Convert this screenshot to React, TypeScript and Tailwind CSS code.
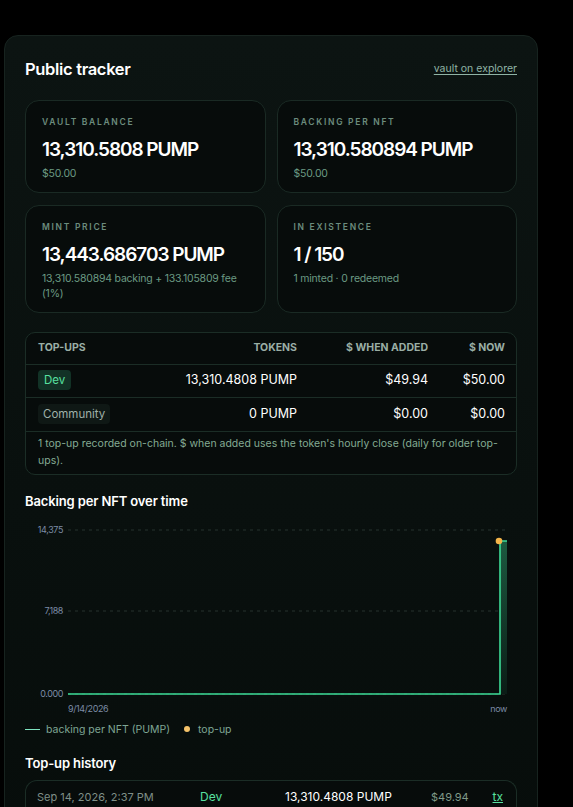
const font = { fontFamily: "Inter, 'Liberation Sans', sans-serif" };

function StatCard({ label, value, sub }: { label: string; value: string; sub: React.ReactNode }) {
  return (
    <div className="rounded-[14px] border border-[#1a2a24] bg-[#070c0b] px-[16px] pb-[11px] pt-[15px]">
      <div className="text-[8.5px] font-semibold uppercase leading-[12px] tracking-[0.2em] text-[#6c8c7e]">
        {label}
      </div>
      <div className="mt-[9px] text-[19px] font-semibold leading-[26px] tracking-[-0.055em] text-white">
        {value}
      </div>
      <div className="mt-[3px] text-[10.5px] leading-[15px] tracking-[-0.02em] text-[#6b9a83]">{sub}</div>
    </div>
  );
}

function Chart() {
  return (
    <svg width="491" height="197" viewBox="0 0 491 197" className="mt-[11px] block">
      <defs>
        <linearGradient id="fill" x1="0" y1="0" x2="0" y2="1">
          <stop offset="0%" stopColor="#1c5a40" />
          <stop offset="100%" stopColor="#0b1c16" />
        </linearGradient>
      </defs>
      <line x1="43" y1="9" x2="482" y2="9" stroke="#27332e" strokeWidth="1" strokeDasharray="3 4" />
      <line x1="43" y1="90" x2="482" y2="90" stroke="#27332e" strokeWidth="1" strokeDasharray="3 4" />
      <line x1="43" y1="173" x2="482" y2="173" stroke="#27332e" strokeWidth="1" strokeDasharray="3 4" />
      <rect x="475" y="20" width="7" height="153" fill="url(#fill)" />
      <polyline
        points="43,173 475,173 475,20 482,20"
        fill="none"
        stroke="#3ddc97"
        strokeWidth="1.6"
      />
      <circle cx="474" cy="20" r="3.3" fill="#f4b54a" />
      <g fontSize="9" fill="#7c8ca6" style={font}>
        <text x="38" y="12" textAnchor="end" letterSpacing="-0.4">14,375</text>
        <text x="38" y="93" textAnchor="end" letterSpacing="-0.4">7,188</text>
        <text x="38" y="176" textAnchor="end" letterSpacing="-0.4">0.000</text>
        <text x="43" y="191" letterSpacing="-0.4">9/14/2026</text>
        <text x="482" y="191" textAnchor="end" letterSpacing="-0.4">now</text>
      </g>
    </svg>
  );
}

export default function App() {
  return (
    <div className="min-h-[807px] bg-black pt-[35px] pl-[4px]" style={font}>
      <div className="w-[534px] rounded-t-[14px] border border-[#17231f] bg-gradient-to-b from-[#0c1412] to-[#070d0b] px-[20px] pt-[21px] pb-[40px]">
        <div className="flex items-center justify-between">
          <h1 className="text-[16.5px] font-semibold leading-[24px] tracking-[-0.02em] text-white">
            Public tracker
          </h1>
          <a className="text-[10.5px] text-[#8fb3a5] underline underline-offset-2">vault on explorer</a>
        </div>

        <div className="mt-[19px] grid grid-cols-2 gap-x-[11px] gap-y-[12px]">
          <StatCard label="Vault balance" value="13,310.5808 PUMP" sub="$50.00" />
          <StatCard label="Backing per NFT" value="13,310.580894 PUMP" sub="$50.00" />
          <StatCard
            label="Mint price"
            value="13,443.686703 PUMP"
            sub="13,310.580894 backing + 133.105809 fee (1%)"
          />
          <StatCard label="In existence" value="1 / 150" sub="1 minted · 0 redeemed" />
        </div>

        <div className="mt-[19px] overflow-hidden rounded-[10px] border border-[#1b2d26] bg-[#070c0b]">
          <table className="w-full table-fixed text-[12.5px]">
            <colgroup>
              <col className="w-[150px]" />
              <col className="w-[121px]" />
              <col className="w-[131px]" />
              <col />
            </colgroup>
            <thead>
              <tr className="h-[31px] border-b border-[#1b2d26] text-[10.5px] font-bold uppercase text-[#9aaea5]">
                <th className="pl-[12px] text-left font-bold">Top-ups</th>
                <th className="text-right font-bold">Tokens</th>
                <th className="text-right font-bold">$ when added</th>
                <th className="pr-[11px] text-right font-bold">$ now</th>
              </tr>
            </thead>
            <tbody>
              <tr className="h-[33px] border-b border-[#1b2d26] text-white">
                <td className="pl-[12px]">
                  <span className="rounded-[4px] bg-[#123226] px-[6px] py-[3px] text-[11.5px] text-[#58e0a0]">Dev</span>
                </td>
                <td className="text-right">13,310.4808 PUMP</td>
                <td className="text-right">$49.94</td>
                <td className="pr-[11px] text-right">$50.00</td>
              </tr>
              <tr className="h-[34px] border-b border-[#1b2d26] text-white">
                <td className="pl-[12px]">
                  <span className="rounded-[4px] bg-[#0f1815] px-[5px] py-[3px] text-[11.5px] text-[#9fb0a8]">Community</span>
                </td>
                <td className="text-right">0 PUMP</td>
                <td className="text-right">$0.00</td>
                <td className="pr-[11px] text-right">$0.00</td>
              </tr>
            </tbody>
          </table>
          <p className="px-[12px] pt-[3px] pb-[5px] text-[10.5px] leading-[17px] text-[#84ab93]">
            1 top-up recorded on-chain. $ when added uses the token's hourly close (daily for older top-ups).
          </p>
        </div>

        <h2 className="mt-[17px] text-[13px] font-semibold leading-[18px] tracking-[-0.01em] text-white">
          Backing per NFT over time
        </h2>
        <Chart />

        <div className="mt-[4px] flex items-center text-[10.5px] text-[#7fa694]">
          <span className="mr-[6px] h-px w-[15px] bg-[#7fe3c0]" />
          <span>backing per NFT (PUMP)</span>
          <span className="ml-[14px] mr-[8px] h-[6px] w-[6px] rounded-full bg-[#f5c36a]" />
          <span>top-up</span>
        </div>

        <h2 className="mt-[17px] text-[13px] font-semibold leading-[18px] tracking-[-0.01em] text-white">
          Top-up history
        </h2>
        <div className="mt-[8px] rounded-t-[12px] border border-b-0 border-[#1b2d26] bg-[#070c0b]">
          <div className="flex h-[32px] items-center pl-[11px] pr-[13px]">
            <span className="w-[163px] text-[11px] text-[#7f8f88]">Sep 14, 2026, 2:37 PM</span>
            <span className="w-[85px] text-[12px] text-[#58e0a0]">Dev</span>
            <span className="w-[146px] text-[12px] text-white">13,310.4808 PUMP</span>
            <span className="flex-1 text-[11px] text-[#7f9a88]">$49.94</span>
            <span className="text-[12px] text-[#58e0a0] underline">tx</span>
          </div>
        </div>
      </div>
    </div>
  );
}
